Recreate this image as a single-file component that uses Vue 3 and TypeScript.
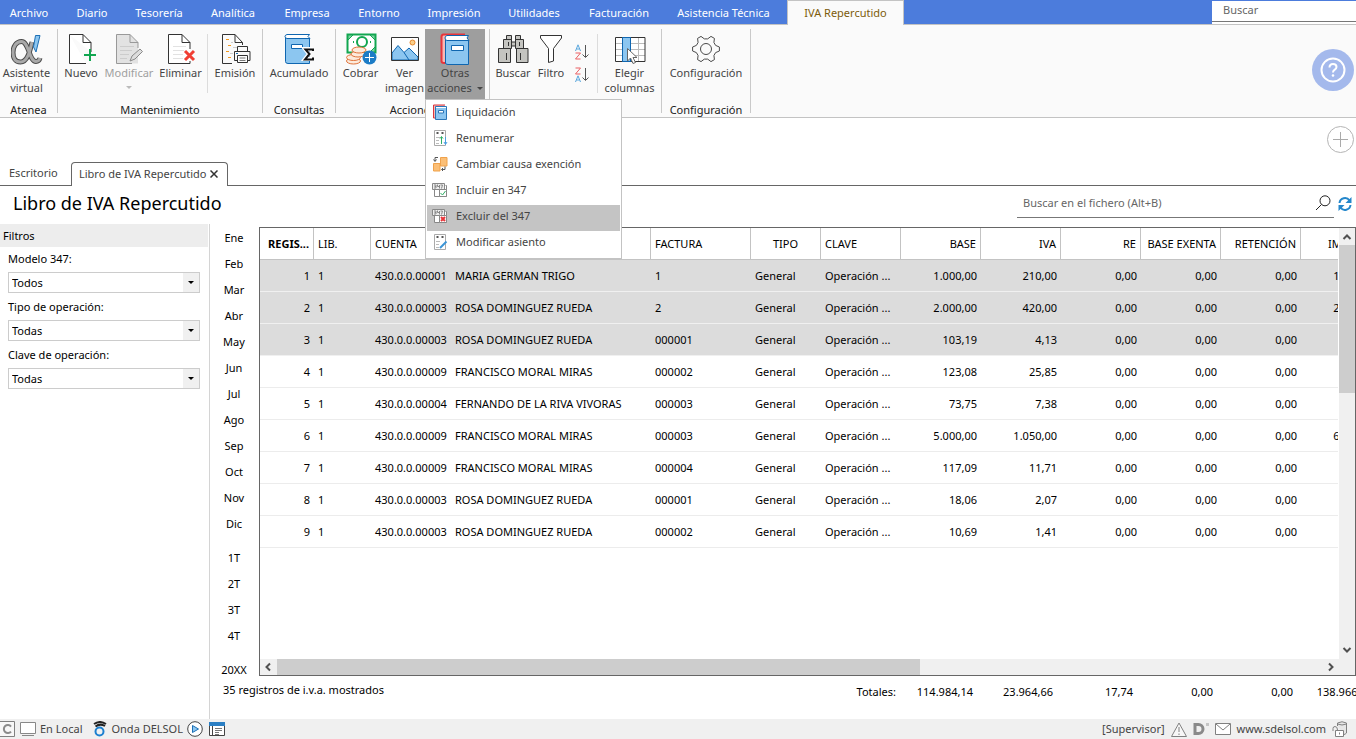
<script setup lang="ts">
import { ref } from 'vue'

interface Row {
  reg: number
  cuenta: string
  nombre: string
  factura: string
  base: string
  iva: string
  importe: string
}

const menus: string[] = [
  'Archivo', 'Diario', 'Tesorería', 'Analítica', 'Empresa', 'Entorno',
  'Impresión', 'Utilidades', 'Facturación', 'Asistencia Técnica', 'IVA Repercutido',
]
const activeMenu = ref('IVA Repercutido')

const actions = [
  { id: 'book', label: 'Liquidación' },
  { id: 'renum', label: 'Renumerar' },
  { id: 'swap', label: 'Cambiar causa exención' },
  { id: 'include', label: 'Incluir en 347' },
  { id: 'exclude', label: 'Excluir del 347' },
  { id: 'edit', label: 'Modificar asiento' },
]
const highlighted = ref('exclude')

const filters = [
  { id: 'modelo', label: 'Modelo 347:', value: 'Todos' },
  { id: 'tipo', label: 'Tipo de operación:', value: 'Todas' },
  { id: 'clave', label: 'Clave de operación:', value: 'Todas' },
]

const periods: string[][] = [
  ['Ene', 'Feb', 'Mar', 'Abr', 'May', 'Jun', 'Jul', 'Ago', 'Sep', 'Oct', 'Nov', 'Dic'],
  ['1T', '2T', '3T', '4T'],
  ['20XX'],
]

const rows: Row[] = [
  { reg: 1, cuenta: '430.0.0.00001', nombre: 'MARIA GERMAN TRIGO', factura: '1', base: '1.000,00', iva: '210,00', importe: '1.210,00' },
  { reg: 2, cuenta: '430.0.0.00003', nombre: 'ROSA DOMINGUEZ RUEDA', factura: '2', base: '2.000,00', iva: '420,00', importe: '2.420,00' },
  { reg: 3, cuenta: '430.0.0.00003', nombre: 'ROSA DOMINGUEZ RUEDA', factura: '000001', base: '103,19', iva: '4,13', importe: '107,32' },
  { reg: 4, cuenta: '430.0.0.00009', nombre: 'FRANCISCO MORAL MIRAS', factura: '000002', base: '123,08', iva: '25,85', importe: '148,93' },
  { reg: 5, cuenta: '430.0.0.00004', nombre: 'FERNANDO DE LA RIVA VIVORAS', factura: '000003', base: '73,75', iva: '7,38', importe: '81,13' },
  { reg: 6, cuenta: '430.0.0.00009', nombre: 'FRANCISCO MORAL MIRAS', factura: '000003', base: '5.000,00', iva: '1.050,00', importe: '6.050,00' },
  { reg: 7, cuenta: '430.0.0.00009', nombre: 'FRANCISCO MORAL MIRAS', factura: '000004', base: '117,09', iva: '11,71', importe: '128,80' },
  { reg: 8, cuenta: '430.0.0.00003', nombre: 'ROSA DOMINGUEZ RUEDA', factura: '000001', base: '18,06', iva: '2,07', importe: '20,13' },
  { reg: 9, cuenta: '430.0.0.00003', nombre: 'ROSA DOMINGUEZ RUEDA', factura: '000002', base: '10,69', iva: '1,41', importe: '12,10' },
]
const selected = ref<number[]>([1, 2, 3])
const totals: string[] = ['114.984,14', '23.964,66', '17,74', '0,00', '0,00', '138.966,54']

function toggle(reg: number): void {
  selected.value = selected.value.includes(reg)
    ? selected.value.filter((r) => r !== reg)
    : [...selected.value, reg]
}
</script>

<template>
  <div class="app">
    <header class="topbar">
      <nav class="menus">
        <button
          v-for="m in menus"
          :key="m"
          type="button"
          class="menu"
          :class="{ on: m === activeMenu }"
          @click="activeMenu = m"
        >{{ m }}</button>
      </nav>
      <div class="topsearch">
        <input type="text" placeholder="Buscar" aria-label="Buscar">
      </div>
    </header>

    <section class="ribbon">
      <div class="group">
        <div class="tools">
          <button type="button" class="tool w57">
            <svg width="32" height="32" viewBox="0 0 32 32">
              <path d="M22 9C20 17 18 29 10.500 29C5 29 3 24.500 3 19.500C3 14 6 8.500 11.500 8.500C19 8.500 19 28.500 26 28.500C28 28.500 29.500 27 30 25" transform="translate(-1,0)" fill="none" stroke="#4c4c4c" stroke-width="5" />
              <path d="M22 9C20 17 18 29 10.500 29C5 29 3 24.500 3 19.500C3 14 6 8.500 11.500 8.500C19 8.500 19 28.500 26 28.500C28 28.500 29.500 27 30 25" transform="translate(-1,0)" fill="none" stroke="#a9a9a9" stroke-width="3" />
              <path d="M24.500 2.500H29L25 19L22.500 14Z" fill="#8cc6f0" stroke="#1c6fb5" />
            </svg>
            <span>Asistente<br>virtual</span>
          </button>
        </div>
        <div class="gname">Atenea</div>
      </div>

      <div class="group">
        <div class="tools">
          <button type="button" class="tool w46">
            <svg width="32" height="32" viewBox="0 0 32 32">
              <path d="M4.500 1.500H18L26 9.500V19M4.500 1.500V30.500H21" fill="#fff" stroke="#333" />
              <path d="M18 1.500V9.500H26" fill="none" stroke="#333" />
              <path d="M25 16V28M19 22H31" stroke="#12a650" stroke-width="2" />
            </svg>
            <span>Nuevo</span>
          </button>
          <button type="button" class="tool w50 off">
            <svg width="32" height="32" viewBox="0 0 32 32">
              <path d="M3.500 1.500H17L25 9.500V30.500H3.500Z" fill="#e2e2e2" />
              <path d="M25 15V9.500L17 1.500H3.500V30.500H19M17 1.500V9.500H25" fill="none" stroke="#999" />
              <path d="M7 13.500H21M7 17.500H19M7 21.500H16M7 25.500H14" stroke="#ccc" />
              <path d="M17 28L19 23L27 16L29.500 18.500L22 26Z" fill="#ddd" stroke="#8a8a8a" />
            </svg>
            <span>Modificar</span>
            <i class="drop"></i>
          </button>
          <button type="button" class="tool w53">
            <svg width="32" height="32" viewBox="0 0 32 32">
              <path d="M3.500 1.500H17L25 9.500V30.500H3.500Z" fill="#fff" />
              <path d="M25 16V9.500L17 1.500H3.500V30.500H25V28M17 1.500V9.500H25" fill="none" stroke="#333" />
              <path d="M8 13.500H21M8 17.500H19M8 21.500H18M8 25.500H18" stroke="#e2e2e2" />
              <path d="M20 18L29 27M29 18L20 27" stroke="#f03e33" stroke-width="3" />
            </svg>
            <span>Eliminar</span>
          </button>
          <i class="sep"></i>
          <button type="button" class="tool w54">
            <svg width="32" height="32" viewBox="0 0 32 32">
              <path d="M3.500 1.500H16L23.500 9.500V12M3.500 1.500V30.500H13M16 1.500V9.500H23.500" fill="none" stroke="#333" />
              <path d="M7 6.500H10M9 12.500H12M7 18.500H10M9 24.500H12" stroke="#f39a1f" />
              <path d="M12 9.500H14M14 14.500H18M11 20.500H14" stroke="#ccc" />
              <path d="M18.500 18.500V13.500H28.500V18.500" fill="#fafafa" stroke="#333" />
              <path d="M15.500 18.500H31V27.500H15.500Z" fill="#fafafa" stroke="#333" />
              <path d="M18.500 22.500H28.500V29.500H18.500Z" fill="#fff" stroke="#333" />
              <path d="M20.500 25H26.500M20.500 27.500H26.500" stroke="#777" />
              <path d="M17 20.500H19" stroke="#1c6fb5" />
            </svg>
            <span>Emisión</span>
          </button>
        </div>
        <div class="gname">Mantenimiento</div>
      </div>

      <div class="group">
        <div class="tools">
          <button type="button" class="tool w72">
            <svg width="32" height="32" viewBox="0 0 32 32">
              <path d="M2.500 2.500V28.500Q2.500 30.500 5 30.500H26.500V6" fill="#8cc6f0" stroke="#0f66b0" />
              <path d="M4 1.500H26.500L25 3.500L27 5.500H4Q2 5 2 3.500Q2 2 4 1.500Z" fill="#fff" stroke="#0f66b0" />
              <path d="M8.500 11.500H19.500V15.500H8.500Z" fill="#fff" stroke="#0f66b0" />
              <path d="M30 16H22L26 21L22 26H30" fill="none" stroke="#fff" stroke-width="4" />
              <path d="M30 18V16.500H22.500L26.500 21L22 26.500H30V24.500" fill="none" stroke="#111" stroke-width="2" />
            </svg>
            <span>Acumulado</span>
          </button>
        </div>
        <div class="gname">Consultas</div>
      </div>

      <div class="group">
        <div class="tools acc">
          <button type="button" class="tool w47">
            <svg width="32" height="32" viewBox="0 0 32 32">
              <path d="M2.500 1.500H30.500V19.500H2.500Z" fill="#fff" stroke="#12a650" stroke-width="2" />
              <path d="M3 2H8L3 7ZM30 2H25L30 7ZM30 19H25L30 14Z" fill="#7fd3a2" stroke="#12a650" />
              <circle cx="17" cy="9" r="5" fill="none" stroke="#12a650" stroke-width="2" />
              <path d="M8 9H9M25 9H26" stroke="#12a650" stroke-width="2" />
              <g fill="#fdebdc" stroke="#e0733a">
                <ellipse cx="8.500" cy="28" rx="7" ry="3" />
                <ellipse cx="8.500" cy="24.500" rx="7" ry="3" />
                <ellipse cx="13" cy="21" rx="7" ry="3" />
                <ellipse cx="14" cy="17" rx="7" ry="3" />
              </g>
              <circle cx="24.500" cy="24.500" r="7" fill="#1c7cc6" />
              <path d="M24.500 20V29M20 24.500H29" stroke="#fff" />
            </svg>
            <span>Cobrar</span>
          </button>
          <button type="button" class="tool w41">
            <svg width="32" height="32" viewBox="0 0 32 32">
              <path d="M2.500 4.500H29.500V27.500H2.500Z" fill="#fff" />
              <path d="M3 20L9 12.500L15 19.500L20 15L29 24V27H3Z" fill="#8cc6f0" stroke="#0f66b0" />
              <path d="M15 19.500L20 27" stroke="#0f66b0" />
              <circle cx="23.500" cy="9.500" r="2.500" fill="#fbd08a" stroke="#e8872b" />
              <path d="M2.500 4.500H29.500V27.500H2.500Z" fill="none" stroke="#333" />
            </svg>
            <span>Ver<br>imagen</span>
          </button>
          <button type="button" class="tool w60 open" aria-haspopup="menu" aria-expanded="true">
            <svg width="32" height="32" viewBox="0 0 32 32">
              <path d="M26 1.500H4.500Q2.500 1.500 2.500 4V28Q2.500 30 5 30H7" fill="#f7b9b4" stroke="#e8353a" stroke-width="2" />
              <path d="M6.500 4V30Q6.500 31.500 9 31.500H29.500V8" fill="#8cc6f0" stroke="#0f66b0" />
              <path d="M8 2.500H29.500L28 5L30 7.500H8Q6 7 6 5Q6 3 8 2.500Z" fill="#fff" stroke="#0f66b0" />
              <path d="M12.500 12.500H24.500V17.500H12.500Z" fill="#fff" stroke="#0f66b0" />
            </svg>
            <span>Otras<br>acciones <i class="caret"></i></span>
          </button>
          <ul class="dropdown" role="menu">
            <li v-for="a in actions" :key="a.id" role="none">
              <button
                type="button"
                role="menuitem"
                :class="{ hot: a.id === highlighted }"
                @mouseenter="highlighted = a.id"
              >
                <svg width="16" height="16" viewBox="0 0 16 16">
                  <template v-if="a.id === 'book'">
                    <path d="M13 1H1.500V14H4" fill="#f7b9b4" stroke="#d9363e" />
                    <path d="M3.500 2.500H14.500V15.500H3.500Z" fill="#8cc6f0" stroke="#2a76b8" />
                    <path d="M4 3.500H14" stroke="#fff" />
                    <path d="M6.500 6.500H11.500V9H6.500Z" fill="#fff" stroke="#2a76b8" />
                  </template>
                  <template v-else-if="a.id === 'swap'">
                    <path d="M8.500 1.500H15V10H8.500ZM1.500 7.500H8V15H1.500Z" fill="#fbbf77" stroke="#f0a24b" />
                    <path d="M6 1.500H3V5M1.500 3.500L3 5.500L4.500 3.500M10 13.500H13V10.500M11 12L9.500 13.500L11 15" fill="none" stroke="#555" />
                  </template>
                  <template v-else-if="a.id === 'include' || a.id === 'exclude'">
                    <path d="M2.500 7.500V14.500H14.500V3.500H13.500" fill="#fff" stroke="#888" />
                    <path d="M.500 1.500H12.500V7.500H.500Z" fill="#eee" stroke="#888" />
                    <path d="M2 3H4V6H2M2.500 4.500H4M5.500 2.500V4.500H7.500M7.500 3V6.500M8.500 3H10.500L9.500 6.500" fill="none" stroke="#888" />
                    <path d="M7.500 7.500H14.500V14.500H7.500Z" fill="#fff" stroke="#888" />
                    <path v-if="a.id === 'include'" d="M8.500 11L10.500 13L13.500 9" fill="none" stroke="#2fae65" />
                    <path v-else d="M9 9L13 13M13 9L9 13" stroke="#e8353a" stroke-width="2" />
                  </template>
                  <template v-else>
                    <path d="M2.500 .500H13.500V15.500H2.500Z" fill="#fff" stroke="#aaa" />
                    <path d="M4.500 3H6.500M9.500 3H11.500" stroke="#555" stroke-width="2" />
                    <path d="M4 7.500H8M4 10.500H7M4 13.500H7" stroke="#bbb" />
                    <template v-if="a.id === 'renum'">
                      <path d="M9.500 14V7M8 8.500L9.500 6.500L11 8.500" fill="none" stroke="#2fae65" />
                      <path d="M13.500 7V14M12 12L13.500 14.500L15 12" fill="none" stroke="#4b9fe0" />
                    </template>
                    <path v-else d="M8 14L14.500 7.500" stroke="#3c95d6" stroke-width="2" />
                  </template>
                </svg>
                {{ a.label }}
              </button>
            </li>
          </ul>
        </div>
        <div class="gname">Acciones</div>
      </div>

      <div class="group">
        <div class="tools">
          <button type="button" class="tool w46">
            <svg width="32" height="32" viewBox="0 0 32 32">
              <g fill="#c4c4c0" stroke="#333">
                <path d="M9.500 2.500H14.500V7.500H9.500ZM18.500 2.500H23.500V7.500H18.500Z" />
                <path d="M6.500 6.500H14.500V15.500H6.500ZM18.500 6.500H26.500V15.500H18.500Z" />
                <path d="M14.500 9H18.500V13H14.500Z" />
                <path d="M1.500 15.500H13.500V29.500H1.500ZM19.500 15.500H31V29.500H19.500Z" />
                <path d="M11.500 9V13M22.500 9V13M9.500 20V27M23.500 20V27" fill="none" />
              </g>
            </svg>
            <span>Buscar</span>
          </button>
          <button type="button" class="tool w30">
            <svg width="32" height="32" viewBox="0 0 32 32">
              <path d="M5.500 2.500H26.500V5L18.500 15.500V28L13.500 29.500V15.500L5.500 5Z" fill="#fff" stroke="#333" />
            </svg>
            <span>Filtro</span>
          </button>
          <div class="sorts">
            <button v-for="k in 2" :key="k" type="button" :aria-label="k === 1 ? 'Orden ascendente' : 'Orden descendente'">
              <svg width="16" height="16" viewBox="0 0 16 16">
                <g :class="{ low: k === 2 }">
                  <path d="M1.500 7L4 .800L6.500 7M2.500 5H5.500" fill="none" stroke="#5aa7dd" />
                </g>
                <g :class="{ high: k === 2 }">
                  <path d="M1.500 9H6.500L1.500 15H6.500" fill="none" stroke="#ea5f62" />
                </g>
                <path d="M11.500 1V13M8.500 10.500L11.500 13.500L14.500 10.500" fill="none" stroke="#555" />
              </svg>
            </button>
          </div>
          <i class="sep"></i>
          <button type="button" class="tool w63">
            <svg width="32" height="32" viewBox="0 0 32 32">
              <path d="M1.500 4.500H31V28.500H1.500Z" fill="#fff" />
              <path d="M2 10.500H31M2 16.500H31M2 22.500H31M24.500 4V28" stroke="#bbb" />
              <path d="M1.500 4.500H31V28.500H1.500Z" fill="none" stroke="#333" />
              <path d="M8.500 4.500H16.500V28.500H8.500Z" fill="#8cc6f0" stroke="#0f66b0" />
              <path d="M13.500 15.500V28L16.500 25L19 30.500L21.500 29.500L19 24.500H23Z" fill="#fff" stroke="#666" />
            </svg>
            <span>Elegir<br>columnas</span>
          </button>
        </div>
        <div class="gname"></div>
      </div>

      <div class="group">
        <div class="tools">
          <button type="button" class="tool w88">
            <svg width="32" height="32" viewBox="0 0 32 32">
              <path d="M9.600 -3.600L13.400 -2V2L9.600 3.600L7.920 6.510L8.430 10.600L4.970 12.600L1.680 10.110H-1.680L-4.970 12.600L-8.430 10.600L-7.920 6.510L-9.600 3.600L-13.400 2V-2L-9.600 -3.600L-7.920 -6.510L-8.430 -10.600L-4.970 -12.600L-1.680 -10.110H1.680L4.970 -12.600L8.430 -10.600L7.920 -6.510Z" transform="translate(16 16)" fill="none" stroke="#4a4a4a" stroke-linejoin="round" />
              <circle cx="16" cy="16" r="5.500" fill="none" stroke="#4a4a4a" />
            </svg>
            <span>Configuración</span>
          </button>
        </div>
        <div class="gname">Configuración</div>
      </div>

      <button type="button" class="help" aria-label="Ayuda">
        <svg width="42" height="42" viewBox="0 0 42 42">
          <circle cx="21" cy="21" r="21" fill="#a4b9ec" />
          <circle cx="21" cy="21" r="11.500" fill="none" stroke="#fff" stroke-width="2" />
          <path d="M17.500 18.500Q17.500 15 21 15Q24.500 15 24.500 18Q24.500 19.500 22.500 20.800Q21 21.800 21 23.500" fill="none" stroke="#fff" stroke-width="2" />
          <circle cx="21" cy="26.500" r="1.300" fill="#fff" />
        </svg>
      </button>
    </section>

    <div class="tabstrip">
      <button type="button" class="tab">Escritorio</button>
      <div class="tab on">
        <span>Libro de IVA Repercutido</span>
        <button type="button" aria-label="Cerrar">
          <svg width="8" height="8" viewBox="0 0 8 8"><path d="M.500 .500L7.500 7.500M7.500 .500L.500 7.500" stroke="#333" stroke-width="1.500" /></svg>
        </button>
      </div>
      <div class="filler">
        <button type="button" aria-label="Nueva pestaña">
          <svg width="27" height="27" viewBox="0 0 27 27">
            <circle cx="13.500" cy="13.500" r="13" fill="#fff" stroke="#b4b4b4" />
            <path d="M13.500 6V21M6 13.500H21" stroke="#aaa" />
          </svg>
        </button>
      </div>
    </div>

    <div class="titlebar">
      <h1>Libro de IVA Repercutido</h1>
      <div class="find">
        <input type="text" placeholder="Buscar en el fichero (Alt+B)" aria-label="Buscar en el fichero">
        <button type="button" aria-label="Buscar">
          <svg width="16" height="16" viewBox="0 0 16 16">
            <circle cx="10" cy="5.800" r="5" fill="none" stroke="#222" />
            <path d="M6.500 9.500L1 15" stroke="#222" />
          </svg>
        </button>
      </div>
      <button type="button" class="refresh" aria-label="Actualizar">
        <svg width="14" height="14" viewBox="0 0 14 14">
          <path d="M1.500 6A5.500 5.500 0 0 1 11.500 3.500M12.500 8A5.500 5.500 0 0 1 2.500 10.500" fill="none" stroke="#2487cb" stroke-width="2" />
          <path d="M13.500 0V6H7.500ZM.500 14V8H6.500Z" fill="#2487cb" />
        </svg>
      </button>
    </div>

    <main class="body">
      <aside class="filters">
        <h2>Filtros</h2>
        <div v-for="f in filters" :key="f.id" class="field">
          <label :for="f.id">{{ f.label }}</label>
          <div class="selwrap">
            <select :id="f.id"><option>{{ f.value }}</option></select>
          </div>
        </div>
      </aside>

      <div class="content">
        <div class="upper">
          <nav class="periods">
            <div v-for="(g, i) in periods" :key="i">
              <button v-for="p in g" :key="p" type="button">{{ p }}</button>
            </div>
          </nav>

          <div class="gridbox">
            <div class="view">
              <table>
                <colgroup>
                  <col class="c54"><col class="c57"><col class="c80"><col class="c200"><col class="c100"><col class="c70">
                  <col v-for="n in 7" :key="n" class="c80">
                </colgroup>
                <thead>
                  <tr>
                    <th class="r b">REGIS...</th>
                    <th>LIB.</th>
                    <th>CUENTA</th>
                    <th></th>
                    <th>FACTURA</th>
                    <th class="c">TIPO</th>
                    <th>CLAVE</th>
                    <th class="r">BASE</th>
                    <th class="r">IVA</th>
                    <th class="r">RE</th>
                    <th class="r">BASE EXENTA</th>
                    <th class="r">RETENCIÓN</th>
                    <th class="r">IMPORTE</th>
                  </tr>
                </thead>
                <tbody>
                  <tr v-for="r in rows" :key="r.reg" :class="{ sel: selected.includes(r.reg) }" @click="toggle(r.reg)">
                    <td class="r">{{ r.reg }}</td>
                    <td>1</td>
                    <td>{{ r.cuenta }}</td>
                    <td>{{ r.nombre }}</td>
                    <td>{{ r.factura }}</td>
                    <td>General</td>
                    <td>Operación ...</td>
                    <td class="r">{{ r.base }}</td>
                    <td class="r">{{ r.iva }}</td>
                    <td class="r">0,00</td>
                    <td class="r">0,00</td>
                    <td class="r">0,00</td>
                    <td class="r">{{ r.importe }}</td>
                  </tr>
                </tbody>
              </table>
            </div>
            <div class="vbar">
              <svg width="16" height="17" viewBox="0 0 16 17"><path d="M4.500 11L8 7.500L11.500 11" fill="none" stroke="#505050" stroke-width="2" /></svg>
              <i class="vthumb"></i>
              <svg width="16" height="17" viewBox="0 0 16 17"><path d="M4.500 6L8 9.500L11.500 6" fill="none" stroke="#505050" stroke-width="2" /></svg>
            </div>
            <div class="hbar">
              <svg width="17" height="16" viewBox="0 0 17 16"><path d="M10 4.500L6.500 8L10 11.500" fill="none" stroke="#505050" stroke-width="2" /></svg>
              <i class="hthumb"></i>
              <svg width="17" height="16" viewBox="0 0 17 16"><path d="M7 4.500L10.500 8L7 11.500" fill="none" stroke="#505050" stroke-width="2" /></svg>
            </div>
          </div>
        </div>

        <div class="summary">
          <span class="count">35 registros de i.v.a. mostrados</span>
          <span class="lead">Totales:</span>
          <span v-for="(t, i) in totals" :key="i" class="total">{{ t }}</span>
        </div>
      </div>
    </main>

    <footer class="status">
      <div class="side">
        <svg width="16" height="16" viewBox="0 0 16 16">
          <path d="M-2 .500H14.500V15.500H-2" fill="#f7f7f7" stroke="#808080" />
          <path d="M11 5.500A4 4 0 1 0 11 10.500" fill="none" stroke="#8a8a8a" stroke-width="2" />
        </svg>
        <svg width="16" height="14" viewBox="0 0 16 14">
          <path d="M.500 .500H15.500V11.500H.500Z" fill="#fff" stroke="#888" />
          <path d="M2 13.500H14" stroke="#888" />
        </svg>
        <span class="local">En Local</span>
        <svg width="14" height="16" viewBox="0 0 14 16">
          <path d="M1 3Q7 -1 13 3M2.500 5.500Q7 2 12 5" fill="none" stroke="#222" stroke-width="2" />
          <circle cx="6.500" cy="10.500" r="4" fill="none" stroke="#1c80d0" stroke-width="2" />
        </svg>
        <span>Onda DELSOL</span>
      </div>
      <div class="side wide">
        <svg width="16" height="16" viewBox="0 0 16 16">
          <circle cx="8" cy="8" r="7.300" fill="#fff" stroke="#444" />
          <path d="M5.500 4.500L11.500 8L5.500 11.500Z" fill="#8cc6f0" stroke="#1c6fb5" />
        </svg>
        <svg width="16" height="14" viewBox="0 0 16 14">
          <path d="M.500 .500H15.500V13.500H.500Z" fill="#fff" stroke="#444" />
          <path d="M0 0H16V4H0Z" fill="#2b7fc4" />
          <path d="M3.500 4V14" stroke="#444" />
          <path d="M6 6.500H13M6 8.500H13M6 10.500H10M6 12.500H10" stroke="#777" />
        </svg>
      </div>
      <div class="side wide end">
        <span>[Supervisor]</span>
        <svg width="16" height="15" viewBox="0 0 16 15">
          <path d="M8 1L15.500 14.500H.500Z" fill="#f7f7f7" stroke="#808080" />
          <path d="M8 5V10M8 11.500V13" stroke="#808080" />
        </svg>
        <svg width="16" height="14" viewBox="0 0 16 14">
          <path d="M2 2.500H5.500A4.500 4.500 0 0 1 5.500 11.500H2Z" fill="none" stroke="#8a8a8a" stroke-width="3" />
          <path d="M13 1H16V4H13Z" fill="#c5c5c5" />
        </svg>
        <svg width="16" height="12" viewBox="0 0 16 12">
          <path d="M.500 .500H15.500V11.500H.500Z" fill="#fff" stroke="#808080" />
          <path d="M1 1L8 7L15 1" fill="none" stroke="#808080" />
        </svg>
        <a href="#">www.sdelsol.com</a>
        <svg width="16" height="16" viewBox="0 0 16 16">
          <path d="M5.500 5V2Q10 -.500 14.500 2V12Q13 13.500 12 13.500" fill="#e6e6e6" stroke="#808080" />
          <path d="M5.500 3Q10 5 14.500 3" fill="none" stroke="#808080" />
          <path d="M3.500 9.500H11.500V15.500H3.500Z" fill="#fff" stroke="#808080" />
          <path d="M1 10V7.500Q1 5.500 3 5.500Q5.500 5.500 5.500 9M7.500 11.500V13.500" fill="none" stroke="#808080" />
        </svg>
      </div>
    </footer>
  </div>
</template>

<style>
body {
  margin: 0;
  overflow: hidden;
}
</style>

<style scoped>
.app {
  display: flex;
  flex-direction: column;
  height: 100vh;
  overflow: hidden;
  background: #fff;
  color: #000;
  font-family: "Noto Sans", "Open Sans", sans-serif;
  font-size: 11px;
}
.app *,
.app *::before,
.app *::after {
  box-sizing: border-box;
}
button,
input,
select {
  font: inherit;
  color: inherit;
  border: 0;
  padding: 0;
  margin: 0;
  background: none;
  border-radius: 0;
}
svg {
  display: block;
  flex: none;
}

.topbar {
  display: flex;
  justify-content: space-between;
  height: 25px;
  flex: none;
  background: #4c7cdc;
  border-bottom: 1px solid #c3c3c3;
}
.menus {
  display: grid;
  grid-template-columns: 58px 68px 66px 82px 66px 78px 72px 88px 82px 127px 117px;
  height: 25px;
}
.menu {
  color: #fff;
  white-space: nowrap;
  text-align: center;
  line-height: 24px;
}
.menu.on {
  background: #fafafa;
  border: 1px solid #c3c3c3;
  border-bottom: 0;
  color: #7d5c0b;
}
.topsearch {
  width: 144px;
  height: 24px;
  border-top: 1px solid #4c7cdc;
  background: #fff;
}
.topsearch input {
  display: block;
  width: 100%;
  height: 21px;
  padding: 0 11px 3px;
  border-bottom: 1px solid #777;
}
input {
  outline: 0;
}
input::placeholder {
  color: #666;
  opacity: 1;
}

.ribbon {
  display: flex;
  height: 93px;
  flex: none;
  padding-top: 4px;
  background: #fafafa;
  border-bottom: 1px solid #c3c3c3;
}
.group {
  position: relative;
  display: flex;
  flex-direction: column;
  height: 84px;
  border-right: 1px solid #c9c9c9;
}
.tools {
  display: flex;
  height: 70px;
}
.acc {
  padding: 0 4px 0 1px;
}
.gname {
  height: 14px;
  line-height: 22px;
  text-align: center;
  color: #222;
}
.tool {
  display: flex;
  flex-direction: column;
  align-items: center;
  padding-top: 4px;
  color: #444;
  line-height: 15px;
  white-space: nowrap;
}
.tool span {
  display: block;
}
.off {
  color: #a0a0a0;
}
.open {
  background: #9e9e9e;
}
.w30 { width: 30px; }
.w41 { width: 41px; }
.w46 { width: 46px; }
.w47 { width: 47px; }
.w50 { width: 50px; }
.w53 { width: 53px; }
.w54 { width: 54px; }
.w57 { width: 57px; padding-right: 4px; }
.w60 { width: 60px; }
.w63 { width: 63px; }
.w72 { width: 72px; }
.w88 { width: 88px; }
.caret,
.drop {
  display: inline-block;
  border: 3px solid transparent;
  border-top-color: #444;
  border-bottom: 0;
}
.caret {
  margin: 0 0 2px 2px;
}
.drop {
  margin-top: 6px;
  border-top-color: #bbb;
}
.sep {
  width: 1px;
  height: 59px;
  margin-top: 5px;
  background: #dcdcdc;
}
.sorts {
  display: flex;
  flex-direction: column;
  gap: 7px;
  width: 31px;
  padding: 15px 0 0 8px;
}
.low {
  transform: translateY(8px);
}
.high {
  transform: translateY(-8px);
}
.dropdown {
  position: absolute;
  z-index: 5;
  left: 89px;
  top: 70px;
  width: 197px;
  margin: 0;
  padding: 1px;
  list-style: none;
  background: #fff;
  border: 1px solid #c3c3c3;
}
.dropdown button {
  display: flex;
  align-items: center;
  gap: 8px;
  width: 100%;
  height: 26px;
  padding: 0 5px 5px;
  color: #444;
  white-space: nowrap;
}
.dropdown .hot {
  background: #c4c4c4;
}
.help {
  align-self: flex-start;
  margin: 20px 2px 0 auto;
}

.tabstrip {
  display: flex;
  align-items: flex-end;
  height: 68px;
  flex: none;
}
.tab {
  height: 24px;
  color: #444;
  border-bottom: 1px solid #666;
  padding: 0 14px 2px 9px;
  width: 71px;
  white-space: nowrap;
}
.tab.on {
  display: flex;
  align-items: center;
  justify-content: space-between;
  width: 157px;
  padding: 0 9px 2px 7px;
  border: 1px solid #666;
  border-bottom: 0;
  border-radius: 4px 4px 0 0;
}
.filler {
  flex: 1;
  display: flex;
  justify-content: flex-end;
  height: 68px;
  padding: 8px 2px 0 0;
  border-bottom: 1px solid #666;
}
.filler button {
  align-self: flex-start;
}

.titlebar {
  display: flex;
  align-items: flex-start;
  height: 38px;
  flex: none;
  padding-right: 4px;
}
h1 {
  flex: 1;
  margin: 0;
  padding-left: 13px;
  font-size: 18px;
  font-weight: 400;
  line-height: 35px;
}
.find {
  display: flex;
  align-items: center;
  width: 317px;
  height: 32px;
  padding: 2px 3px 0 6px;
  border-bottom: 1px solid #777;
}
.find input {
  flex: 1;
}
.refresh {
  margin: 11px 0 0 4px;
}

.body {
  flex: 1;
  min-height: 0;
  display: grid;
  grid-template-columns: 210px minmax(0, 1fr);
  grid-template-rows: minmax(0, 1fr);
}
.filters {
  border-right: 1px solid #d4d4d4;
}
h2 {
  margin: 0 1px 4px 0;
  padding-left: 3px;
  background: #ededed;
  font-size: 11px;
  font-weight: 400;
  line-height: 23px;
}
.field {
  padding: 0 9px 0 8px;
  margin-bottom: 6px;
}
.field label {
  display: block;
  line-height: 16px;
  margin-bottom: 5px;
}
.selwrap {
  position: relative;
}
.selwrap::before {
  content: "";
  position: absolute;
  right: 1px;
  top: 1px;
  bottom: 1px;
  width: 16px;
  background: #f0f0f0;
  pointer-events: none;
}
.selwrap::after {
  content: "";
  position: absolute;
  right: 6px;
  top: 9px;
  border: 3px solid transparent;
  border-top-color: #000;
  border-bottom: 0;
  pointer-events: none;
}
select {
  display: block;
  appearance: none;
  width: 100%;
  height: 21px;
  padding: 0 3px;
  border: 1px solid #ccc;
}

.content {
  display: flex;
  flex-direction: column;
  min-width: 0;
}
.upper {
  flex: 1;
  min-height: 0;
  display: grid;
  grid-template-columns: 49px minmax(0, 1fr);
  grid-template-rows: minmax(0, 1fr);
}
.periods {
  display: flex;
  flex-direction: column;
  gap: 8px;
}
.periods button {
  display: block;
  width: 48px;
  height: 26px;
  text-align: center;
}
.gridbox {
  display: grid;
  grid-template-columns: minmax(0, 1fr) 16px;
  grid-template-rows: minmax(0, 1fr) 16px;
  margin-top: 3px;
  border: 1px solid #666;
}
.view {
  overflow: hidden;
  margin-right: 1px;
}
table {
  width: 1121px;
  table-layout: fixed;
  border-collapse: separate;
  border-spacing: 0;
}
.c54 { width: 54px; }
.c57 { width: 57px; }
.c70 { width: 70px; }
.c80 { width: 80px; }
.c100 { width: 100px; }
.c200 { width: 200px; }
th,
td {
  height: 32px;
  padding: 0 4px;
  text-align: left;
  font-weight: 400;
  white-space: nowrap;
}
th {
  border-right: 1px solid #c3c3c3;
  border-bottom: 1px solid #c3c3c3;
}
td {
  border-bottom: 1px solid #ececec;
}
.sel td {
  background: #dcdcdc;
  border-bottom-color: #f0f0f0;
}
.r {
  text-align: right;
}
.c {
  text-align: center;
}
.b {
  font-weight: 700;
}
.vbar {
  display: flex;
  flex-direction: column;
  background: #f0f0f0;
}
.vthumb {
  height: 148px;
  margin-bottom: auto;
  background: #cdcdcd;
}
.hbar {
  grid-column: 1 / 3;
  display: flex;
  padding-right: 16px;
  background: #f0f0f0;
}
.hthumb {
  width: 643px;
  margin-right: auto;
  background: #cdcdcd;
}
.summary {
  display: grid;
  grid-template-columns: 590px 96px 77px repeat(5, 80px);
  height: 43px;
  flex: none;
  overflow: hidden;
  line-height: 32px;
  text-align: right;
}
.summary .count {
  padding-left: 13px;
  text-align: left;
  line-height: 28px;
}

.status {
  display: flex;
  align-items: center;
  gap: 4px;
  height: 20px;
  flex: none;
  padding-right: 8px;
  background: #f0f0f0;
  color: #444;
  white-space: nowrap;
}
.side {
  display: flex;
  align-items: center;
  gap: 4px;
}
.side.wide {
  gap: 6px;
}
.side.end {
  margin-left: auto;
}
.side .local {
  margin-right: 7px;
}
.side span,
.side a {
  padding-bottom: 2px;
}
.side a {
  color: #444;
  text-decoration: none;
}
</style>
